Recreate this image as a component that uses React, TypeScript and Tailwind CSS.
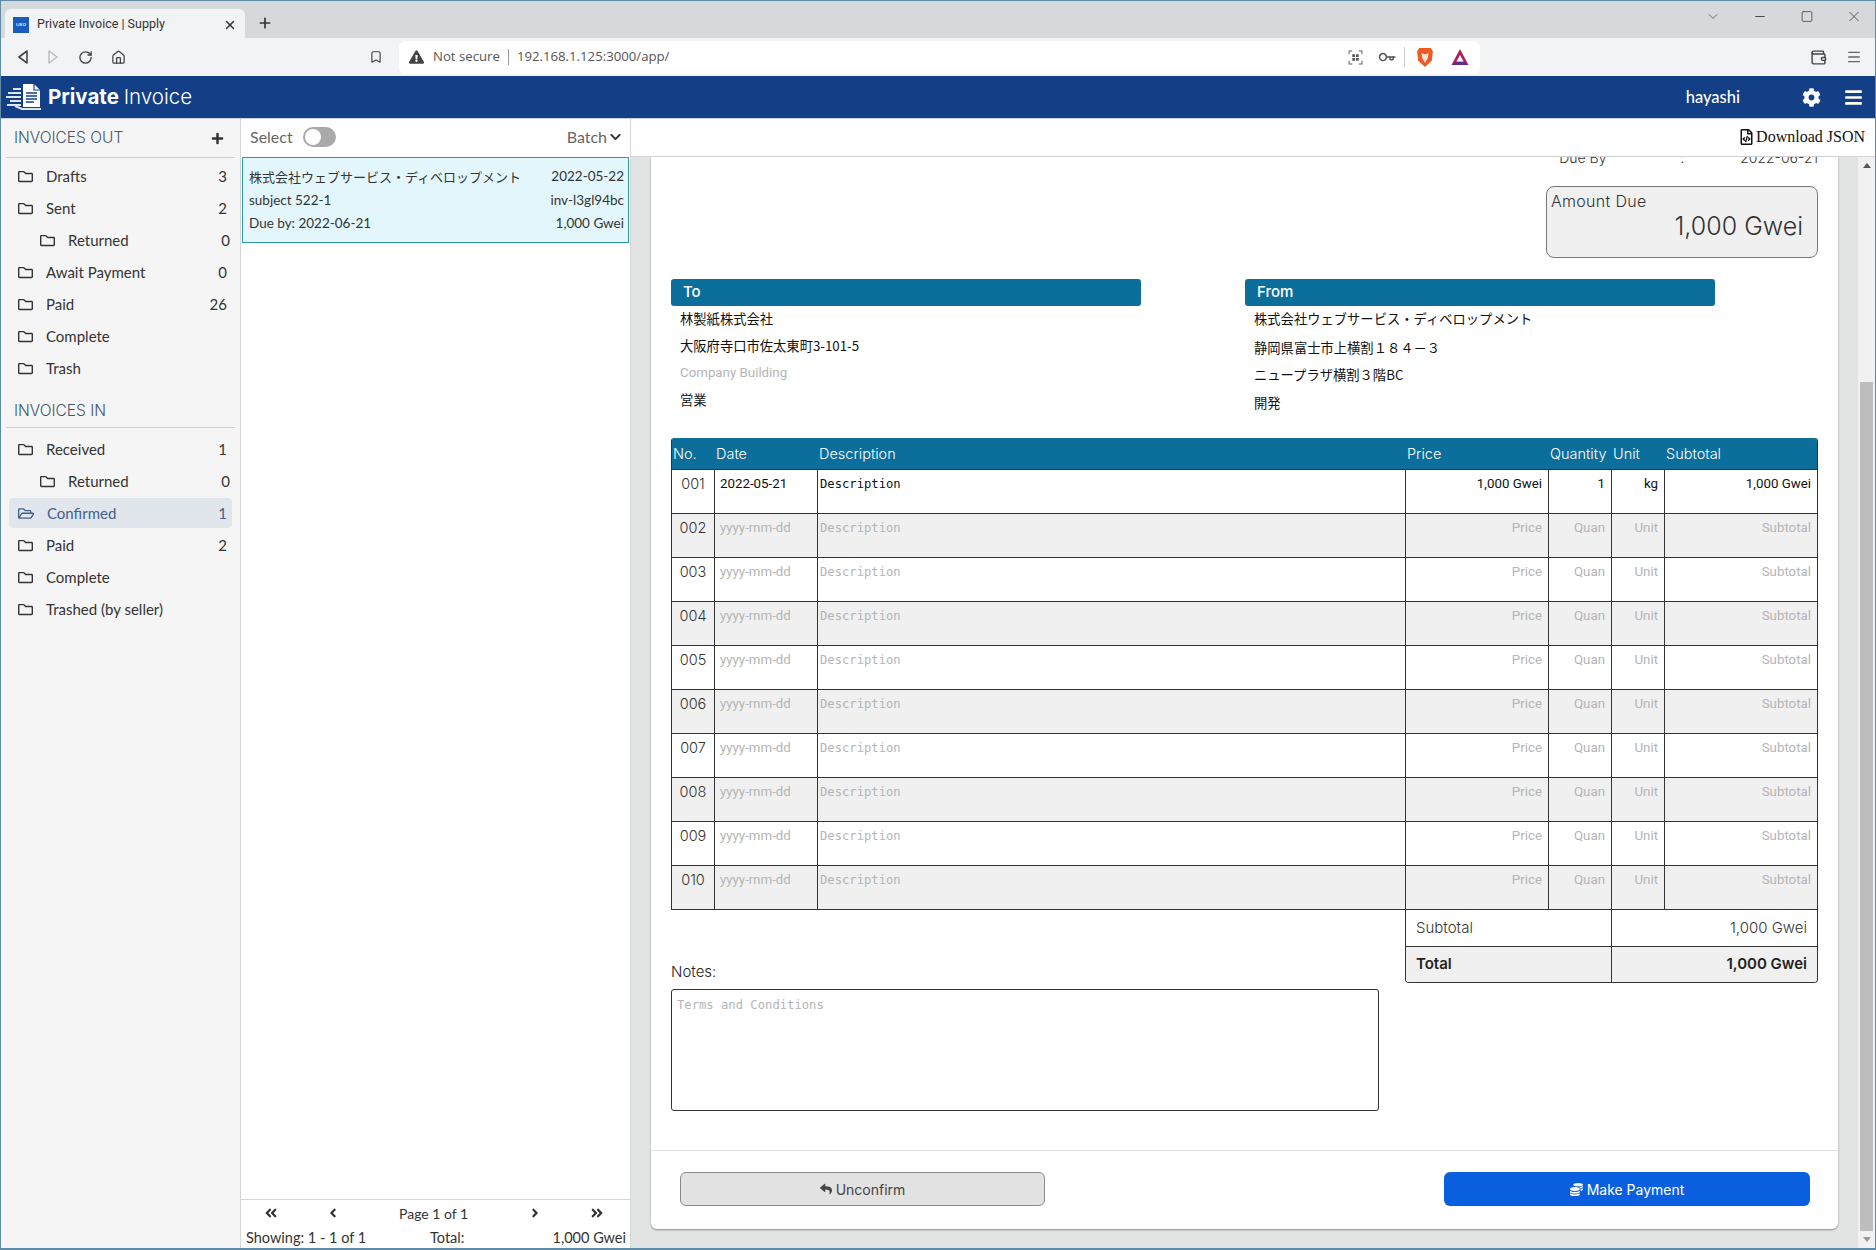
import React from "react";
import { FaRegFolder, FaRegFolderOpen, FaCog, FaBars, FaPlus, FaChevronDown, FaAngleDoubleLeft, FaAngleDoubleRight, FaAngleLeft, FaAngleRight, FaReply, FaCoins, FaRegFileCode, FaExclamationTriangle } from "react-icons/fa";
import { ChevronDown, Minus, Square, X, Plus, RotateCw, Home, Bookmark, Key, Wallet, Menu } from "lucide-react";

const muli = "font-['Lato','Noto_Sans_CJK_JP',sans-serif]";
const mont = "font-['Inter','Noto_Sans_CJK_JP',sans-serif]";

function Folder({ label, count, sub, active }: { label: string; count?: string; sub?: boolean; active?: boolean }) {
  return (
    <div className={`mx-[8px] flex items-center rounded-[4px] text-[15px] ${active ? "my-px h-[30px] bg-[#e1e6ed] text-[#41608a]" : "h-[32px] text-[#333]"} ${sub ? "pl-[31px] pr-[2px]" : "pl-[9px] pr-[5px]"}`}>
      {active ? <FaRegFolderOpen className="h-[15px] w-[16px] text-[#41608a]" /> : <FaRegFolder className="h-[15px] w-[15px] text-[#333]" />}
      <span className="ml-[13px] flex-1 whitespace-nowrap">{label}</span>
      {count && <span>{count}</span>}
    </div>
  );
}

function Row({ no, filled }: { no: string; filled?: boolean }) {
  const even = parseInt(no) % 2 === 0;
  const ph = filled ? "text-[#111]" : "text-[#b5b5b5]";
  return (
    <div className={`grid h-[44px] grid-cols-[42px_103px_588px_143px_63px_53px_1fr] border-t border-[#333] font-['Roboto',sans-serif] text-[13.3px] ${even ? "bg-[#f0f0f0]" : "bg-white"}`}>
      <div className={`${mont} pt-[3px] text-center text-[14.5px] font-light text-[#333]`}>{no}</div>
      <div className={`border-l border-[#333] pl-[5px] pt-[4px] ${ph}`}>{filled ? "2022-05-21" : "yyyy-mm-dd"}</div>
      <div className={`border-l border-[#333] pl-[2px] pt-[5px] font-['DejaVu_Sans_Mono',monospace] text-[12.2px] ${ph}`}>Description</div>
      <div className={`border-l border-[#333] pr-[6px] pt-[4px] text-right ${ph}`}>{filled ? "1,000 Gwei" : "Price"}</div>
      <div className={`border-l border-[#333] pr-[6px] pt-[4px] text-right ${ph}`}>{filled ? "1" : "Quan"}</div>
      <div className={`border-l border-[#333] pr-[6px] pt-[4px] text-right ${ph}`}>{filled ? "kg" : "Unit"}</div>
      <div className={`border-l border-[#333] pr-[6px] pt-[4px] text-right ${ph}`}>{filled ? "1,000 Gwei" : "Subtotal"}</div>
    </div>
  );
}

function Logo() {
  return (
    <svg width="38" height="30" viewBox="0 0 38 30" fill="none" className="shrink-0">
      <path d="M18 2h11l6 6v17H18z" fill="#fff" />
      <path d="M29 2v6h6" stroke="#12408a" strokeWidth="1.2" />
      <path d="M21 11h11M21 14h11M21 17h11M21 20h8" stroke="#12408a" strokeWidth="1.4" />
      <path d="M8 7h8M3 11h13M1 15h15M5 19h11M2 23h14" stroke="#dfe6f0" strokeWidth="1.8" />
      <path d="M10 24l7 3h19" stroke="#dfe6f0" strokeWidth="2" />
    </svg>
  );
}

export default function App() {
  const uiFont = "font-['Noto_Sans','Open_Sans',sans-serif]";
  return (
    <div className={`flex h-[1250px] w-[1876px] flex-col overflow-hidden border border-b-2 border-[#5f8aa8] border-b-[#5f8aa8] bg-white ${muli}`}>
      {/* tab strip */}
      <div className={`flex h-[37px] shrink-0 items-end bg-[#d5d9dc] ${uiFont}`}>
        <div className="ml-[4px] flex h-[29px] w-[240px] items-center rounded-t-[6px] bg-[#f1f3f4] pl-[8px] pr-[8px] pt-[2px] text-[12.5px] text-[#333]">
          <span className="flex h-[16px] w-[16px] items-center justify-center bg-[#1a5bc0] text-[6px] text-white">uso</span>
          <span className="ml-[8px] flex-1 font-['Roboto',sans-serif]">Private Invoice | Supply</span>
          <X className="h-[14px] w-[14px] text-[#333]" strokeWidth={2.5} />
        </div>
        <Plus className="mb-[7px] ml-[12px] h-[16px] w-[16px] text-[#333]" strokeWidth={2.5} />
        <div className="flex-1" />
        <div className="mb-[13px] flex items-center gap-[29px] pr-[12px] text-[#444]">
          <ChevronDown className="h-[15px] w-[18px]" strokeWidth={1.2} />
          <Minus className="h-[15px] w-[18px]" strokeWidth={1.5} />
          <Square className="h-[13px] w-[18px]" strokeWidth={1.5} />
          <X className="h-[17px] w-[18px]" strokeWidth={1.2} />
        </div>
      </div>
      {/* toolbar */}
      <div className={`flex h-[38px] shrink-0 items-center bg-[#f1f3f4] text-[#444] ${uiFont}`}>
        <div className="ml-[15px] flex w-[381px] items-center gap-[18px]">
          <svg width="13" height="16" viewBox="0 0 13 16" fill="none"><path d="M11 2 3 8l8 6z" stroke="#444" strokeWidth="1.6" strokeLinejoin="round" /></svg>
          <svg width="13" height="16" viewBox="0 0 13 16" fill="none"><path d="M2 2l8 6-8 6z" stroke="#b9bcc0" strokeWidth="1.4" strokeLinejoin="round" /></svg>
          <RotateCw className="h-[15px] w-[15px]" strokeWidth={2.2} />
          <Home className="h-[15px] w-[15px]" strokeWidth={2} />
          <Bookmark className="ml-[225px] h-[16px] w-[14px] shrink-0" strokeWidth={2} />
        </div>
        <div className="ml-[2px] flex h-[33px] w-[1081px] items-center rounded-[6px] bg-white pl-[10px] pr-[10px] font-['Open_Sans',sans-serif] text-[13.2px]">
          <FaExclamationTriangle className="h-[14px] w-[15px] text-[#444]" />
          <span className="ml-[9px] text-[#555]">Not secure</span>
          <span className="mx-[8px] h-[16px] w-px bg-[#999]" />
          <span className="flex-1 text-[#555]">192.168.1.125:3000/app/</span>
          <svg width="15" height="15" viewBox="0 0 14 14" className="mr-[16px]"><path d="M1 4V1h3M10 1h3v3M13 10v3h-3M4 13H1v-3" stroke="#666" fill="none" /><path d="M4 4h2.500v2.500H4zM7.500 4H10v2.500H7.500zM4 7.500h2.500V10H4zM7.500 7.500H10V10H7.500z" fill="#555" /></svg>
          <Key className="mr-[10px] h-[15px] w-[15px] rotate-45 text-[#555]" strokeWidth={2.5} />
          <span className="mr-[11px] h-[20px] w-px bg-[#ccc]" />
          <svg width="18" height="21" viewBox="0 0 17 20" className="mr-[16px]"><path d="M3 1h11l2 3-1 9-6.500 6L2 13 1 4z" fill="#ef5a24" /><path d="M5 6l3.500 1L12 6l-1 5-2.500 4L6 11z" fill="#fbe3d4" /></svg>
          <svg width="20" height="18" viewBox="0 0 18 17"><path d="M9 1l8 15H1z" fill="#b01e5a" /><path d="M9 6.500l3.500 6.500h-7z" fill="#fff" /><path d="M1 16l4-3h8l4 3z" fill="#662d91" /></svg>
        </div>
        <div className="flex-1" />
        <Wallet className="mr-[19px] h-[17px] w-[17px] text-[#444]" strokeWidth={2} />
        <Menu className="mr-[13px] h-[16px] w-[16px] text-[#666]" strokeWidth={2} />
      </div>
      {/* app bar */}
      <div className="flex h-[43px] shrink-0 items-center border-b border-[#c9d2dc] bg-[#123f86] text-white">
        <span className="ml-[4px]"><Logo /></span>
        <span className={`ml-[5px] text-[20.5px] ${mont} font-bold`}>Private <span className="font-light">Invoice</span></span>
        <div className="flex-1" />
        <span className="text-[16.5px] font-medium">hayashi</span>
        <FaCog className="ml-[62px] h-[19px] w-[19px]" />
        <FaBars className="ml-[23px] mr-[12px] h-[19px] w-[19px]" />
      </div>
      {/* body */}
      <div className="flex min-h-0 flex-1">
        {/* sidebar */}
        <aside className="flex w-[240px] shrink-0 flex-col border-r border-[#d5d5d5] bg-[#f5f5f5]">
          <div className="mx-[5px] flex h-[39px] shrink-0 items-center justify-between border-b border-[#cfcfcf] pl-[8px] pr-[11px]">
            <span className={`${mont} text-[15.5px] font-light text-[#44566c]`}>INVOICES OUT</span>
            <FaPlus className="h-[13px] w-[13px] text-[#333]" />
          </div>
          <div className="pt-[2px]">
            <Folder label="Drafts" count="3" />
            <Folder label="Sent" count="2" />
            <Folder label="Returned" count="0" sub />
            <Folder label="Await Payment" count="0" />
            <Folder label="Paid" count="26" />
            <Folder label="Complete" />
            <Folder label="Trash" />
          </div>
          <div className="mx-[5px] mt-[10px] flex h-[34px] shrink-0 items-center border-b border-[#cfcfcf] pl-[8px]">
            <span className={`${mont} text-[15.5px] font-light text-[#44566c]`}>INVOICES IN</span>
          </div>
          <div className="pt-[5px]">
            <Folder label="Received" count="1" />
            <Folder label="Returned" count="0" sub />
            <Folder label="Confirmed" count="1" active />
            <Folder label="Paid" count="2" />
            <Folder label="Complete" />
            <Folder label="Trashed (by seller)" />
          </div>
        </aside>
        {/* list */}
        <section className="flex w-[390px] shrink-0 flex-col border-r border-[#d5d5d5] bg-white">
          <div className="flex h-[38px] shrink-0 items-center pb-[2px] pl-[9px] pr-[8px] text-[16px] text-[#666]">
            <span>Select</span>
            <span className="relative ml-[10px] h-[20px] w-[33px] rounded-full bg-[#a9a9a9]">
              <span className="absolute left-[2px] top-[2px] h-[16px] w-[16px] rounded-full bg-white" />
            </span>
            <span className="flex-1" />
            <span>Batch</span>
            <FaChevronDown className="ml-[2px] h-[12px] w-[13px] text-[#333]" />
          </div>
          <div className="mx-px flex h-[86px] shrink-0 flex-col border border-[#2a9aa8] bg-[#e3f6fc] pl-[6px] pr-[4px] pt-[6px] text-[13.5px] text-[#333]">
            <div className="flex h-[25px] items-center justify-between"><span className="font-['Noto_Sans_CJK_JP',sans-serif] text-[13px]">株式会社ウェブサービス・ディベロップメント</span><span>2022-05-22</span></div>
            <div className="flex h-[23px] items-center justify-between"><span>subject 522-1</span><span>inv-l3gl94bc</span></div>
            <div className="flex h-[23px] items-center justify-between"><span>Due by: 2022-06-21</span><span>1,000 Gwei</span></div>
          </div>
          <div className="flex-1" />
          <div className="flex h-[27px] shrink-0 items-center border-t border-[#d5d5d5] pl-[23px] text-[14px] text-[#333]">
            <FaAngleDoubleLeft className="h-[14px] w-[14px]" />
            <FaAngleLeft className="ml-[48px] h-[14px] w-[14px]" />
            <span className="ml-[59px] w-[70px] whitespace-nowrap">Page 1 of 1</span>
            <FaAngleRight className="ml-[59px] h-[14px] w-[14px]" />
            <FaAngleDoubleRight className="ml-[48px] h-[14px] w-[14px]" />
          </div>
          <div className="flex h-[22px] shrink-0 items-center pl-[5px] pr-[4px] pt-[1px] text-[14.5px] text-[#333]">
            <span className="w-[184px]">Showing: 1 - 1 of 1</span>
            <span>Total:</span>
            <span className="flex-1 text-right">1,000 Gwei</span>
          </div>
        </section>
        {/* main */}
        <main className="flex min-w-0 flex-1 flex-col">
          <div className="flex h-[38px] shrink-0 items-center justify-end border-b border-[#d5d5d5] pb-[2px] pr-[10px] font-['Liberation_Serif',serif] text-[16px] text-[#111]">
            <FaRegFileCode className="mr-[3px] h-[16px] w-[13px]" />
            Download JSON
          </div>
          <div className="flex min-h-0 flex-1 bg-[#e2e4e4]">
            <div className="min-w-0 flex-1 pl-[20px] pr-[20px] pb-[19px]">
              <div className={`flex h-full flex-col overflow-hidden rounded-b-[6px] bg-white shadow-[0_1px_2px_rgba(0,0,0,0.4)] ${mont}`}>
                <div className="flex min-h-0 flex-1 flex-col px-[20px]">
                  <div className="-mt-[10px] flex h-[17px] shrink-0 justify-end text-[14px] font-light text-[#333]">
                    <span className="w-[121px]">Due By</span>
                    <span className="w-[60px]">:</span>
                    <span>2022-06-21</span>
                  </div>
                  <div className="mt-[22px] ml-auto flex h-[72px] w-[272px] shrink-0 flex-col rounded-[8px] border border-[#777] bg-[#f0f0f0] pl-[4px] pr-[14px]">
                    <span className="mt-[5px] text-[16px] font-light leading-[18px] tracking-[0.3px] text-[#333]">Amount Due</span>
                    <span className="text-right text-[25px] font-light leading-[32px] text-[#333]">1,000 Gwei</span>
                  </div>
                  <div className="mt-[21px] flex shrink-0 gap-[104px] font-['Noto_Sans_CJK_JP',sans-serif] text-[13.3px] text-[#111]">
                    <div className="w-[470px]">
                      <div className={`flex h-[27px] items-center rounded-[3px] bg-[#0b6e9b] pl-[12px] text-[15px] font-medium text-white ${mont}`}>To</div>
                      <div className="-mt-px pl-[9px]">
                        <div className="flex h-[27px] items-center">林製紙株式会社</div>
                        <div className="flex h-[27px] items-center">大阪府寺口市佐太東町3-101-5</div>
                        <div className="flex h-[27px] items-center font-['Roboto',sans-serif] text-[#b5b5b5]">Company Building</div>
                        <div className="flex h-[27px] items-center">営業</div>
                      </div>
                    </div>
                    <div className="w-[470px]">
                      <div className={`flex h-[27px] items-center rounded-[3px] bg-[#0b6e9b] pl-[12px] text-[15px] font-medium text-white ${mont}`}>From</div>
                      <div className="-mt-px pl-[9px]">
                        <div className="flex h-[27px] items-center">株式会社ウェブサービス・ディベロップメント</div>
                        <div className="mt-[2px] flex h-[27px] items-center">静岡県富士市上横割１８４－３</div>
                        <div className="flex h-[27px] items-center">ニュープラザ横割３階BC</div>
                        <div className="mt-px flex h-[27px] items-center">開発</div>
                      </div>
                    </div>
                  </div>
                  <div className="mt-[22px] shrink-0 overflow-hidden rounded-t-[3px] border border-t-0 border-[#333]">
                    <div className="grid h-[31px] grid-cols-[42px_103px_588px_143px_63px_53px_1fr] items-center bg-[#0b6e9b] text-[14.5px] font-light text-white">
                      <span className="pl-[1px]">No.</span>
                      <span className="pl-[2px]">Date</span>
                      <span className="pl-[2px]">Description</span>
                      <span className="pl-[2px]">Price</span>
                      <span className="pl-[2px] whitespace-nowrap">Quantity</span>
                      <span className="pl-[2px]">Unit</span>
                      <span className="pl-[2px]">Subtotal</span>
                    </div>
                    {["001","002","003","004","005","006","007","008","009","010"].map((n, i) => <Row key={n} no={n} filled={i === 0} />)}
                  </div>
                  <div className="flex shrink-0 items-start justify-between">
                    <div className="w-[708px] pt-[53px]">
                      <div className="text-[15px] font-light leading-[18px] text-[#222]">Notes:</div>
                      <div className="mt-[8px] h-[122px] rounded-[3px] border border-[#333] px-[5px] pt-[6px] font-['DejaVu_Sans_Mono',monospace] text-[12.2px] text-[#b5b5b5]">Terms and Conditions</div>
                    </div>
                    <div className="w-[413px] overflow-hidden rounded-b-[4px] border border-t-0 border-[#333] text-[15px]">
                      <div className="grid h-[36px] grid-cols-[205px_1fr] items-center font-light text-[#333]">
                        <span className="pl-[10px]">Subtotal</span>
                        <span className="flex h-full items-center justify-end border-l border-[#333] pr-[10px]">1,000 Gwei</span>
                      </div>
                      <div className="grid h-[36px] grid-cols-[205px_1fr] items-center border-t border-[#333] bg-[#f0f0f0] font-semibold text-[#222]">
                        <span className="pl-[10px]">Total</span>
                        <span className="flex h-full items-center justify-end border-l border-[#333] pr-[10px]">1,000 Gwei</span>
                      </div>
                    </div>
                  </div>
                </div>
                <div className="flex h-[79px] shrink-0 items-center justify-between border-t border-[#e2e2e2] pb-[2px] pl-[29px] pr-[28px] text-[14px]">
                  <div className="flex h-[34px] w-[365px] items-center justify-center gap-[4px] rounded-[6px] border border-[#8a8a8a] bg-[#e2e2e2] text-[#444]">
                    <FaReply className="h-[12px] w-[12px]" /> Unconfirm
                  </div>
                  <div className="flex h-[34px] w-[366px] items-center justify-center gap-[4px] rounded-[6px] bg-[#0a5fe0] text-white">
                    <FaCoins className="h-[13px] w-[13px]" /> Make Payment
                  </div>
                </div>
              </div>
            </div>
            {/* scrollbar */}
            <div className="flex w-[17px] shrink-0 flex-col bg-[#f1f1f1]">
              <div className="flex h-[17px] items-center justify-center"><span className="h-0 w-0 border-x-[4px] border-b-[5px] border-x-transparent border-b-[#555]" /></div>
              <div className="mx-[2px] mt-[208px] flex-1 bg-[#bdbdbd]" />
              <div className="flex h-[17px] items-center justify-center"><span className="h-0 w-0 border-x-[4px] border-t-[5px] border-x-transparent border-t-[#999]" /></div>
            </div>
          </div>
        </main>
      </div>
    </div>
  );
}
